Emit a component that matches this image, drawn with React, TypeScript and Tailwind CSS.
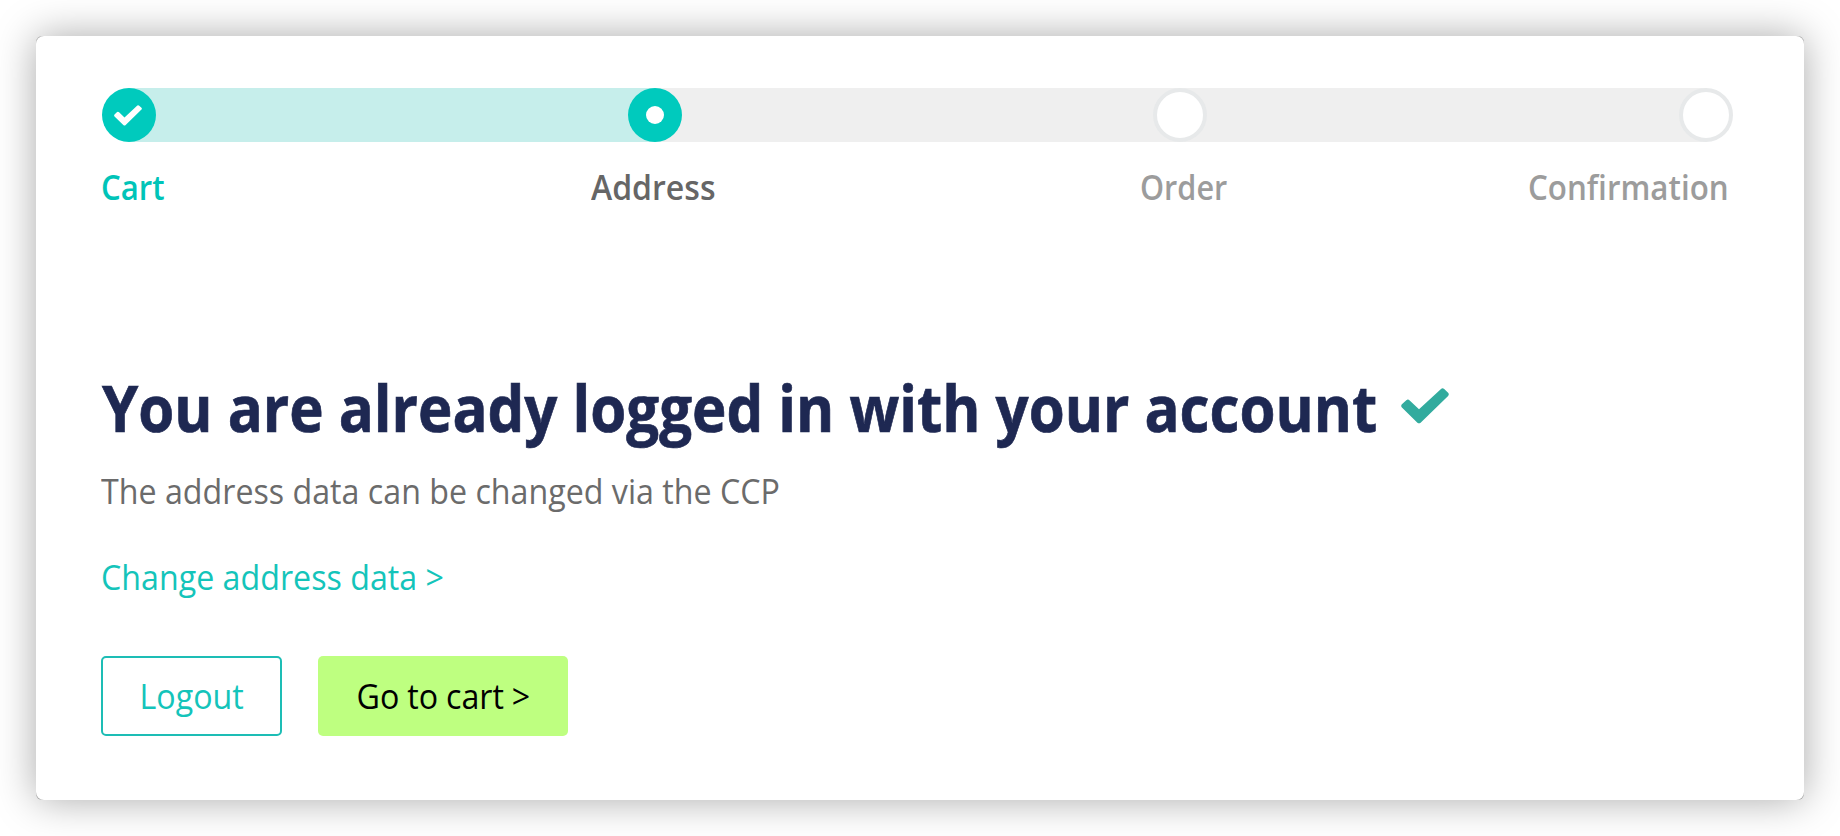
import React from "react";

type StepState = "done" | "current" | "upcoming";

function CheckMark({ className }: { className: string }) {
  return (
    <svg viewBox="0 0 48 36" className={className} fill="currentColor" aria-hidden="true">
      <path d="M.9 16.3 5.3 12.2Q7 10.900 8.700 12.500L18 21.300 40 .9Q41.600-.4 43.200 1.100L47.100 4.700Q48.500 6.300 47.100 7.900L19.600 34.700Q18 36 16.400 34.700L.9 19.500Q-.5 17.900.9 16.300Z" />
    </svg>
  );
}

function StepDot({ state }: { state: StepState }) {
  if (state === "upcoming") {
    return <div className="size-[54px] rounded-full border-4 border-[#e7e9ea] bg-white" />;
  }
  return (
    <div className="flex size-[54px] items-center justify-center rounded-full bg-[#00cabd] text-white">
      {state === "done" ? (
        <CheckMark className="mr-[2px] h-[21px] w-7" />
      ) : (
        <div className="size-[18px] rounded-full bg-white" />
      )}
    </div>
  );
}

export default function App() {
  return (
    <div className="h-[836px] w-[1840px] overflow-hidden bg-white p-9 font-['Open_Sans',sans-serif]">
      <div className="h-[764px] rounded-[6px] bg-[#aaaaaa] shadow-[0_0_40px_rgba(0,0,0,0.34)]">
        <main className="h-full rounded-[8px] bg-white pt-[52px] pl-[66px]">
          <div className="relative h-[54px] w-[1631px]">
            <div className="absolute inset-x-[27px] inset-y-0 flex">
              <div className="w-1/3 bg-[#c6eeeb]" />
              <div className="w-2/3 bg-[#efefef]" />
            </div>
            <div className="relative flex justify-between">
              <StepDot state="done" />
              <StepDot state="current" />
              <StepDot state="upcoming" />
              <StepDot state="upcoming" />
            </div>
          </div>
          <div className="-ml-px mt-[20px] flex text-[35px] leading-[50px] font-semibold whitespace-nowrap">
            <span className="w-[490px] origin-left scale-x-89 text-[#00c4b8]">Cart</span>
            <span className="w-[549px] origin-left scale-x-[0.915] text-[#666666]">Address</span>
            <span className="w-[388px] origin-left scale-x-[0.875] text-[#9c9c9c]">Order</span>
            <span className="origin-left scale-x-[0.895] text-[#9c9c9c]">Confirmation</span>
          </div>
          <div className="mt-[156px] flex h-[80px] items-center">
            <h1 className="w-[1299px] origin-left scale-x-[0.909] text-[64px] leading-[80px] font-bold whitespace-nowrap text-[#1e2852] [-webkit-text-stroke:0.7px_#1e2852]">
              You are already logged in with your account
            </h1>
            <CheckMark className="mb-[5px] h-9 w-12 text-[#32ab9e]" />
          </div>
          <p className="-ml-px mt-[18px] origin-left scale-x-92 text-[35px] leading-[50px] text-[#6b6b6b]">
            The address data can be changed via the CCP
          </p>
          <a className="-ml-px mt-[36px] block origin-left scale-x-92 text-[35px] leading-[50px] text-[#14c4ba]">
            Change address data &gt;
          </a>
          <div className="mt-[54px] flex gap-9 text-[35px] leading-[76px]">
            <button className="-ml-px h-20 w-[181px] rounded-[5px] border-2 border-[#1dbdb5] pb-px text-[#14c4ba]">
              <span className="inline-block scale-x-92">Logout</span>
            </button>
            <button className="h-20 w-[250px] rounded-[5px] bg-[#beff80] pb-px text-black">
              <span className="inline-block scale-x-92 [word-spacing:-0.5px]">Go to cart &gt;</span>
            </button>
          </div>
        </main>
      </div>
    </div>
  );
}
